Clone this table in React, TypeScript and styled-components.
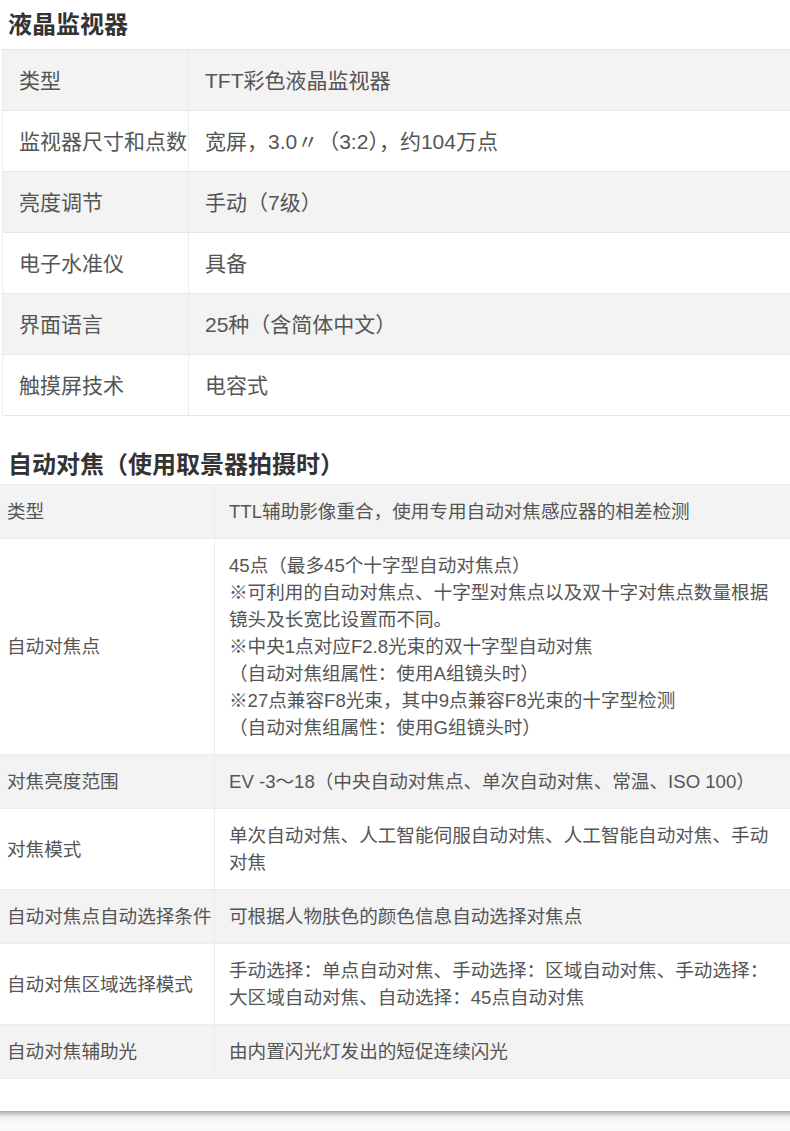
import * as React from 'react';
import styled, { createGlobalStyle } from 'styled-components';

const GlobalStyle = createGlobalStyle`
    html, body {
        margin: 0;
        padding: 0;
        background: #fff;
    }
    body {
        font-family: "Liberation Sans", "Noto Sans CJK SC", sans-serif;
        color: #555;
        width: 790px;
        overflow: hidden;
    }
`;

const Page = styled.div`
    display: flex;
    flex-direction: column;
    width: 790px;
`;

const Heading = styled.h2<{ $top: number }>`
    margin: ${(p) => p.$top}px 0 0 8px;
    height: 44px;
    display: flex;
    align-items: center;
    font-size: 24px;
    font-weight: bold;
    color: #333;
`;

const MonitorTable = styled.div`
    margin: 5px 0 0 2px;
    border-top: 1px solid #e6e6e6;
    border-left: 1px solid #ececec;
`;

const MonitorRow = styled.div<{ $shade: boolean }>`
    display: grid;
    grid-template-columns: 186px 1fr;
    height: 61px;
    background: ${(p) => (p.$shade ? '#f3f3f3' : '#fff')};
    border-bottom: 1px solid #e8e8e8;
    box-sizing: border-box;
    font-size: 21px;
`;

const MonitorCell = styled.div<{ $label?: boolean }>`
    display: flex;
    align-items: center;
    padding: 0 0 3px 16px;
    border-right: ${(p) => (p.$label ? '1px solid #ececec' : 'none')};
    white-space: nowrap;
`;

const AfTable = styled.div`
    border-top: 1px solid #ececec;
`;

const AfRow = styled.div<{ $shade: boolean }>`
    display: grid;
    grid-template-columns: 215px 1fr;
    background: ${(p) => (p.$shade ? '#f3f3f3' : '#fff')};
    border-bottom: 1px solid #ececec;
    font-size: 18.6px;
    line-height: 27px;
`;

const AfCell = styled.div<{ $label?: boolean }>`
    display: flex;
    flex-direction: column;
    justify-content: center;
    padding: 13px ${(p) => (p.$label ? '4px 13px 7px' : '12px 13px 14px')};
    border-right: ${(p) => (p.$label ? '1px solid #ececec' : 'none')};
    white-space: ${(p) => (p.$label ? 'nowrap' : 'normal')};
`;

const Footer = styled.div`
    margin-top: 32px;
    height: 20px;
    background: linear-gradient(#a9a9a9 0px, #cfcfcf 3px, #efefef 6px, #fafafa 12px);
`;

const monitor: [string, string][] = [
    ['类型', 'TFT彩色液晶监视器'],
    ['监视器尺寸和点数', '宽屏，3.0〃（3:2），约104万点'],
    ['亮度调节', '手动（7级）'],
    ['电子水准仪', '具备'],
    ['界面语言', '25种（含简体中文）'],
    ['触摸屏技术', '电容式'],
];

const af: [string, string[]][] = [
    ['类型', ['TTL辅助影像重合，使用专用自动对焦感应器的相差检测']],
    [
        '自动对焦点',
        [
            '45点（最多45个十字型自动对焦点）',
            '※可利用的自动对焦点、十字型对焦点以及双十字对焦点数量根据镜头及长宽比设置而不同。',
            '※中央1点对应F2.8光束的双十字型自动对焦',
            '（自动对焦组属性：使用A组镜头时）',
            '※27点兼容F8光束，其中9点兼容F8光束的十字型检测',
            '（自动对焦组属性：使用G组镜头时）',
        ],
    ],
    ['对焦亮度范围', ['EV -3～18（中央自动对焦点、单次自动对焦、常温、ISO 100）']],
    ['对焦模式', ['单次自动对焦、人工智能伺服自动对焦、人工智能自动对焦、手动对焦']],
    ['自动对焦点自动选择条件', ['可根据人物肤色的颜色信息自动选择对焦点']],
    ['自动对焦区域选择模式', ['手动选择：单点自动对焦、手动选择：区域自动对焦、手动选择：大区域自动对焦、自动选择：45点自动对焦']],
    ['自动对焦辅助光', ['由内置闪光灯发出的短促连续闪光']],
];

export default function App() {
    return (
        <Page>
            <GlobalStyle />
            <Heading $top={0}>液晶监视器</Heading>
            <MonitorTable>
                {monitor.map(([k, v], i) => (
                    <MonitorRow key={k} $shade={i % 2 === 0}>
                        <MonitorCell $label>{k}</MonitorCell>
                        <MonitorCell>{v}</MonitorCell>
                    </MonitorRow>
                ))}
            </MonitorTable>
            <Heading $top={24}>自动对焦（使用取景器拍摄时）</Heading>
            <AfTable>
                {af.map(([k, lines], i) => (
                    <AfRow key={k} $shade={i % 2 === 0}>
                        <AfCell $label>{k}</AfCell>
                        <AfCell>
                            {lines.map((l) => (
                                <span key={l}>{l}</span>
                            ))}
                        </AfCell>
                    </AfRow>
                ))}
            </AfTable>
            <Footer />
        </Page>
    );
}
